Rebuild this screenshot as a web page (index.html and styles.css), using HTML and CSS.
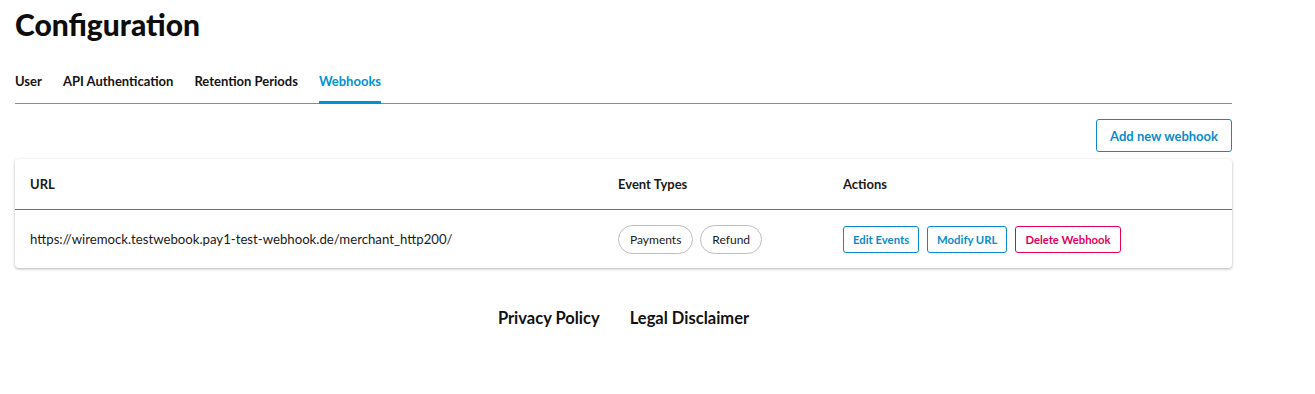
FILE: index.html
```html
<!DOCTYPE html>
<html lang="en">
<head>
    <meta charset="UTF-8">
    <meta name="viewport" content="width=device-width, initial-scale=1.0">
    <title>Configuration</title>
    <link rel="stylesheet" href="styles.css">
</head>
<body>
    <div class="page">
        <h1 class="title">Configuration</h1>

        <ul class="tabs">
            <li><a href="#">User</a></li>
            <li><a href="#">API Authentication</a></li>
            <li><a href="#">Retention Periods</a></li>
            <li class="active"><a href="#">Webhooks</a></li>
        </ul>

        <div class="toolbar">
            <button class="btn btn-add">Add new webhook</button>
        </div>

        <!-- Webhook table -->
        <div class="card">
            <div class="row head">
                <div class="col-url">URL</div>
                <div class="col-events">Event Types</div>
                <div class="col-actions">Actions</div>
            </div>
            <div class="row body">
                <div class="col-url">https://wiremock.testwebook.pay1-test-webhook.de/merchant_http200/</div>
                <div class="col-events">
                    <span class="chip">Payments</span>
                    <span class="chip">Refund</span>
                </div>
                <div class="col-actions">
                    <button class="btn btn-small">Edit Events</button>
                    <button class="btn btn-small">Modify URL</button>
                    <button class="btn btn-small btn-danger">Delete Webhook</button>
                </div>
            </div>
        </div>

        <div class="footer">
            <a href="#">Privacy Policy</a>
            <a href="#">Legal Disclaimer</a>
        </div>
    </div>
</body>
</html>
```

FILE: styles.css
```css
* {
    margin: 0;
    padding: 0;
    box-sizing: border-box;
}

body {
    font-family: 'Lato', 'Liberation Sans', Arial, sans-serif;
    color: #1a1a1a;
    background: white;
}

.page {
    width: 1217px;
    margin-left: 15px;
}

.title {
    font-size: 30px;
    font-weight: 900;
    color: #0d0d0d;
    line-height: 36px;
    padding-top: 6px;
}

/* Tabs */
.tabs {
    list-style: none;
    display: flex;
    gap: 21px;
    margin-top: 23px;
    border-bottom: 1px solid #8c8c8c;
}

.tabs li {
    padding: 5px 0 12px;
    border-bottom: 3px solid transparent;
    margin-bottom: -1px;
}

.tabs a {
    color: #141414;
    text-decoration: none;
    font-size: 13px;
    font-weight: 700;
}

.tabs li.active {
    border-bottom-color: #0092d4;
}

.tabs li.active a {
    color: #0092d4;
}

.toolbar {
    display: flex;
    justify-content: flex-end;
    margin-top: 15px;
}

.btn {
    font-family: inherit;
    background: white;
    color: #0a8ccc;
    border: 1px solid #0a8ccc;
    border-radius: 3px;
    font-weight: 700;
    cursor: pointer;
}

.btn-add {
    height: 33px;
    padding: 0 13px;
    font-size: 13px;
}

/* Card */
.card {
    margin-top: 7px;
    border-radius: 4px;
    box-shadow: 0 1px 3px rgba(0, 0, 0, 0.3);
    background: white;
}

.row {
    display: flex;
    align-items: center;
    padding: 0 15px;
}

.row.head {
    height: 51px;
    font-size: 13px;
    font-weight: 700;
    border-bottom: 1px solid #0092d4;
}

.row.body {
    height: 58px;
    font-size: 13.2px;
}

.col-url {
    width: 588px;
}

.col-events {
    width: 225px;
    display: flex;
    gap: 7px;
}

.col-actions {
    display: flex;
    gap: 8px;
}

.chip {
    display: inline-flex;
    align-items: center;
    height: 29px;
    padding: 0 11px;
    border: 1px solid #bdbdbd;
    border-radius: 15px;
    font-size: 12px;
}

.btn-small {
    height: 27px;
    padding: 0 9px;
    font-size: 11.3px;
}

.btn-danger {
    color: #e4005a;
    border-color: #e4005a;
}

.footer {
    display: flex;
    justify-content: center;
    gap: 30px;
    margin-top: 40px;
}

.footer a {
    color: #111;
    text-decoration: none;
    font-size: 16.5px;
    font-weight: 700;
}
```
